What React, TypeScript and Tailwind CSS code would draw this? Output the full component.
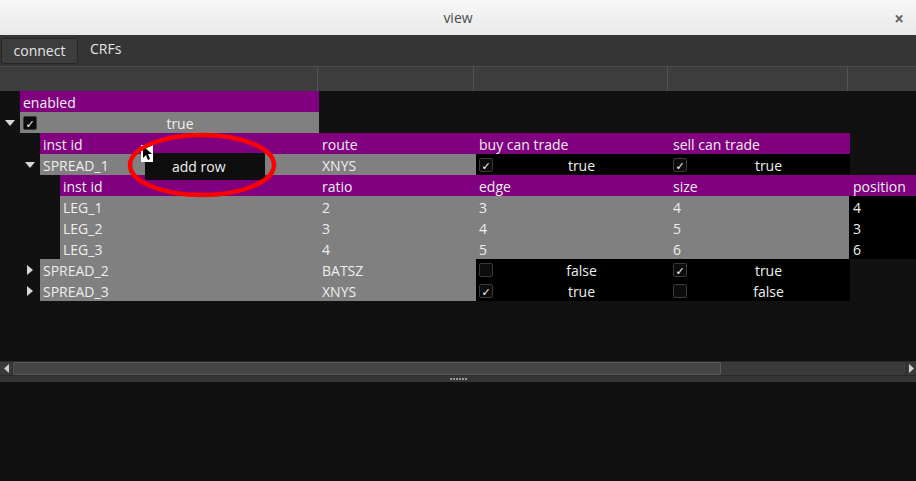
import React from 'react';

const font = { fontFamily: '"Open Sans", "DejaVu Sans", sans-serif' };

function Check({ on }: { on: boolean }) {
  return (
    <span className="flex h-[14px] w-[14px] shrink-0 items-center justify-center rounded-[2px] border border-[#3a3a3a] bg-[#0c0c0c] text-[11px] font-bold leading-none text-white">
      {on ? '✓' : ''}
    </span>
  );
}

function Arrow({ dir }: { dir: 'down' | 'right' }) {
  return (
    <span className="flex w-[20px] shrink-0 items-center justify-center">
      {dir === 'down' ? (
        <svg width="10" height="6" viewBox="0 0 10 6">
          <path d="M0 0 L10 0 L5 6 Z" fill="#d8d8d8" />
        </svg>
      ) : (
        <svg width="6" height="10" viewBox="0 0 6 10">
          <path d="M0 0 L6 5 L0 10 Z" fill="#d8d8d8" />
        </svg>
      )}
    </span>
  );
}

function BoolCell({ on, w }: { on: boolean; w: string }) {
  return (
    <div className={`flex h-full items-center bg-black pl-[3px] ${w}`}>
      <Check on={on} />
      <span className="flex-1 pt-[1px] text-center">{on ? 'true' : 'false'}</span>
    </div>
  );
}

const spreads = [
  { id: 'SPREAD_2', route: 'BATSZ', buy: false, sell: true },
  { id: 'SPREAD_3', route: 'XNYS', buy: true, sell: false },
];

const legs = [
  ['LEG_1', '2', '3', '4', '4'],
  ['LEG_2', '3', '4', '5', '3'],
  ['LEG_3', '4', '5', '6', '6'],
];

export default function App() {
  return (
    <div className="flex h-[481px] w-[916px] flex-col overflow-hidden bg-[#111111] text-[14px] text-[#eeeeee]" style={font}>
      {/* title bar */}
      <div className="relative flex h-[35px] shrink-0 items-center justify-center bg-gradient-to-b from-[#f7f7f7] to-[#e9e9e9] pb-[1px] text-[14px] text-[#4a4a4a]">
        view
        <span className="absolute right-[12px] top-[6px] text-[17px] font-bold text-[#666]">×</span>
      </div>

      {/* toolbar */}
      <div className="flex h-[31px] shrink-0 items-center gap-[12px] bg-[#353535]">
        <button className="ml-[1px] h-[26px] w-[77px] rounded-[3px] border border-[#262626] bg-[#3d3d3d] text-[14px] text-[#e6e6e6]">
          connect
        </button>
        <span className="-mt-[4px] text-[#e6e6e6]">CRFs</span>
      </div>

      {/* column header */}
      <div className="flex h-[25px] shrink-0 border-t border-[#4a4a4a] bg-[#3d3d3d]">
        <div className="w-[318px] border-r border-[#555]" />
        <div className="w-[156px] border-r border-[#555]" />
        <div className="w-[194px] border-r border-[#555]" />
        <div className="w-[180px] border-r border-[#555]" />
        <div className="flex-1" />
      </div>

      {/* tree */}
      <div className="relative h-[270px] shrink-0 [&>div>div]:pt-[1px]">
        <div className="flex h-[21px] pl-[20px]">
          <div className="flex w-[299px] items-center bg-[#800080] pl-[3px]">enabled</div>
        </div>
        <div className="flex h-[21px]">
          <Arrow dir="down" />
          <div className="flex w-[299px] items-center bg-[#808080] pl-[3px]">
            <Check on />
            <span className="flex-1 pl-[4px] text-center">true</span>
          </div>
        </div>
        <div className="flex h-[21px] pl-[40px]">
          <div className="flex w-[279px] items-center bg-[#800080] pl-[3px]">inst id</div>
          <div className="flex w-[157px] items-center bg-[#800080] pl-[3px]">route</div>
          <div className="flex w-[194px] items-center bg-[#800080] pl-[3px]">buy can trade</div>
          <div className="flex w-[180px] items-center bg-[#800080] pl-[3px]">sell can trade</div>
        </div>
        <div className="flex h-[21px] pl-[20px]">
          <Arrow dir="down" />
          <div className="flex w-[279px] items-center bg-[#808080] pl-[3px]">SPREAD_1</div>
          <div className="flex w-[157px] items-center bg-[#808080] pl-[3px]">XNYS</div>
          <BoolCell on w="w-[194px]" />
          <BoolCell on w="w-[180px]" />
        </div>
        <div className="flex h-[21px] pl-[60px]">
          <div className="flex w-[259px] items-center bg-[#800080] pl-[3px]">inst id</div>
          <div className="flex w-[157px] items-center bg-[#800080] pl-[3px]">ratio</div>
          <div className="flex w-[194px] items-center bg-[#800080] pl-[3px]">edge</div>
          <div className="flex w-[179px] items-center bg-[#800080] pl-[3px]">size</div>
          <div className="flex flex-1 items-center bg-[#800080] pl-[4px]">position</div>
        </div>
        {legs.map((l) => (
          <div key={l[0]} className="flex h-[21px] pl-[60px]">
            <div className="flex w-[259px] items-center bg-[#808080] pl-[3px]">{l[0]}</div>
            <div className="flex w-[157px] items-center bg-[#808080] pl-[3px]">{l[1]}</div>
            <div className="flex w-[194px] items-center bg-[#808080] pl-[3px]">{l[2]}</div>
            <div className="flex w-[179px] items-center bg-[#808080] pl-[3px]">{l[3]}</div>
            <div className="flex flex-1 items-center bg-black pl-[4px]">{l[4]}</div>
          </div>
        ))}
        {spreads.map((s) => (
          <div key={s.id} className="flex h-[21px] pl-[20px]">
            <Arrow dir="right" />
            <div className="flex w-[279px] items-center bg-[#808080] pl-[3px]">{s.id}</div>
            <div className="flex w-[157px] items-center bg-[#808080] pl-[3px]">{s.route}</div>
            <BoolCell on={s.buy} w="w-[194px]" />
            <BoolCell on={s.sell} w="w-[180px]" />
          </div>
        ))}

        {/* context menu */}
        <div className="absolute left-[145px] top-[62px] flex h-[27px] w-[120px] items-center rounded-[2px] bg-[#0e0e0e] pl-[27px] text-[14px] text-[#f0f0f0]">
          add row
        </div>
        {/* cursor */}
        <svg className="absolute left-[141px] top-[54px]" width="12" height="17" viewBox="0 0 12 17">
          <rect x="0" y="0" width="12" height="17" fill="#ffffff" />
          <path d="M2 1 L2 13 L5 10 L7 15 L9 14 L7 9 L11 9 Z" fill="#000" />
        </svg>
        {/* red ellipse annotation */}
        <svg className="pointer-events-none absolute left-[126px] top-[40px]" width="152" height="68" viewBox="0 0 152 68">
          <ellipse cx="76" cy="34" rx="72" ry="30" fill="none" stroke="#ff0000" strokeWidth="4.5" />
        </svg>
      </div>

      {/* horizontal scrollbar */}
      <div className="flex h-[15px] shrink-0 items-center border-y border-[#2a2a2a] bg-[#3a3a3a]">
        <span className="flex h-full w-[13px] items-center justify-center border-r border-[#2a2a2a]">
          <svg width="5" height="9" viewBox="0 0 5 9">
            <path d="M5 0 L0 4.5 L5 9 Z" fill="#cfcfcf" />
          </svg>
        </span>
        <div className="h-[13px] w-[708px] rounded-[1px] border border-[#5a5a5a] bg-[#454545]" />
        <div className="flex-1" />
        <span className="flex h-full w-[10px] items-center justify-center border-l border-[#2a2a2a]">
          <svg width="5" height="9" viewBox="0 0 5 9">
            <path d="M0 0 L5 4.5 L0 9 Z" fill="#cfcfcf" />
          </svg>
        </span>
      </div>

      {/* splitter */}
      <div className="flex h-[6px] shrink-0 items-center justify-center bg-[#353535]">
        <div className="flex gap-[1px]">
          {[0, 1, 2, 3, 4, 5].map((i) => (
            <span key={i} className="h-[2px] w-[2px] bg-[#9a9a9a]" />
          ))}
        </div>
      </div>

      <div className="flex-1 bg-[#111111]" />
    </div>
  );
}
